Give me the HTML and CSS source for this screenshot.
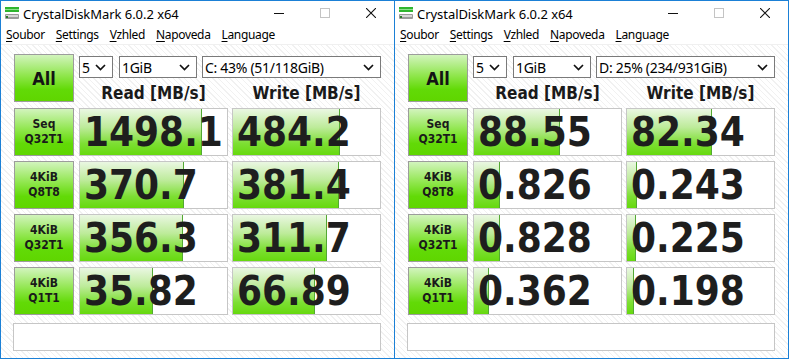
FILE: index.html
```html
<!DOCTYPE html>
<html lang="cs">
<head>
    <meta charset="UTF-8">
    <title>CrystalDiskMark 6.0.2 x64</title>
    <link rel="stylesheet" href="styles.css">
</head>
<body>
<div class="desk">

    <!-- C: drive -->
    <div class="win win-left">
        <div class="titlebar">
            <svg class="appicon" width="16" height="16" viewBox="0 0 16 16">
                <rect x="1" y="2" width="14" height="5" fill="#2fb52f"/>
                <rect x="1" y="4" width="14" height="1" fill="#8fe08f"/>
                <rect x="1" y="9" width="14" height="5" rx="1" fill="#9a9a9a"/>
                <rect x="2" y="10" width="12" height="2" fill="#d6d6d6"/>
                <rect x="2" y="11" width="2" height="2" fill="#2a7a2a"/>
            </svg>
            <span class="title">CrystalDiskMark 6.0.2 x64</span>
            <div class="caption">
                <span class="capbtn"><svg width="10" height="10" viewBox="0 0 10 10"><line x1="0" y1="5.5" x2="10" y2="5.5" stroke="#111" stroke-width="1"/></svg></span>
                <span class="capbtn"><svg width="10" height="10" viewBox="0 0 10 10"><rect x="0.5" y="0.5" width="9" height="9" fill="none" stroke="#c4c4c4" stroke-width="1"/></svg></span>
                <span class="capbtn"><svg width="10" height="10" viewBox="0 0 10 10"><path d="M0 0 L10 10 M10 0 L0 10" stroke="#111" stroke-width="1.1"/></svg></span>
            </div>
        </div>
        <div class="menubar">
            <span><u>S</u>oubor</span>
            <span><u>S</u>ettings</span>
            <span><u>V</u>zhled</span>
            <span><u>N</u>apoveda</span>
            <span><u>L</u>anguage</span>
        </div>
        <div class="client">
            <div class="toprow">
                <div class="allbtn">All</div>
                <div class="selects">
                    <div class="combo combo-count">5<svg class="chev" width="11" height="7" viewBox="0 0 11 7"><polyline points="1,1 5.5,5.5 10,1" fill="none" stroke="#111" stroke-width="1.7"/></svg></div>
                    <div class="combo combo-size">1GiB<svg class="chev" width="11" height="7" viewBox="0 0 11 7"><polyline points="1,1 5.5,5.5 10,1" fill="none" stroke="#111" stroke-width="1.7"/></svg></div>
                    <div class="combo combo-drive">C: 43% (51/118GiB)<svg class="chev" width="11" height="7" viewBox="0 0 11 7"><polyline points="1,1 5.5,5.5 10,1" fill="none" stroke="#111" stroke-width="1.7"/></svg></div>
                </div>
                <div class="colhead">Read [MB/s]</div>
                <div class="colhead">Write [MB/s]</div>
            </div>
            <div class="rows">
                <div class="label">Seq<br>Q32T1</div>
                <div class="cell"><div class="bar" style="width:122px"></div><span class="val">1498.1</span></div>
                <div class="cell"><div class="bar" style="width:107px"></div><span class="val">484.2</span></div>

                <div class="label">4KiB<br>Q8T8</div>
                <div class="cell"><div class="bar" style="width:104px"></div><span class="val">370.7</span></div>
                <div class="cell"><div class="bar" style="width:106px"></div><span class="val">381.4</span></div>

                <div class="label">4KiB<br>Q32T1</div>
                <div class="cell"><div class="bar" style="width:103px"></div><span class="val">356.3</span></div>
                <div class="cell"><div class="bar" style="width:94px"></div><span class="val">311.7</span></div>

                <div class="label">4KiB<br>Q1T1</div>
                <div class="cell"><div class="bar" style="width:73px"></div><span class="val">35.82</span></div>
                <div class="cell"><div class="bar" style="width:82px"></div><span class="val">66.89</span></div>
            </div>
            <div class="comment"></div>
        </div>
    </div>

    <!-- D: drive -->
    <div class="win win-right">
        <div class="titlebar">
            <svg class="appicon" width="16" height="16" viewBox="0 0 16 16">
                <rect x="1" y="2" width="14" height="5" fill="#2fb52f"/>
                <rect x="1" y="4" width="14" height="1" fill="#8fe08f"/>
                <rect x="1" y="9" width="14" height="5" rx="1" fill="#9a9a9a"/>
                <rect x="2" y="10" width="12" height="2" fill="#d6d6d6"/>
                <rect x="2" y="11" width="2" height="2" fill="#2a7a2a"/>
            </svg>
            <span class="title">CrystalDiskMark 6.0.2 x64</span>
            <div class="caption">
                <span class="capbtn"><svg width="10" height="10" viewBox="0 0 10 10"><line x1="0" y1="5.5" x2="10" y2="5.5" stroke="#111" stroke-width="1"/></svg></span>
                <span class="capbtn"><svg width="10" height="10" viewBox="0 0 10 10"><rect x="0.5" y="0.5" width="9" height="9" fill="none" stroke="#c4c4c4" stroke-width="1"/></svg></span>
                <span class="capbtn"><svg width="10" height="10" viewBox="0 0 10 10"><path d="M0 0 L10 10 M10 0 L0 10" stroke="#111" stroke-width="1.1"/></svg></span>
            </div>
        </div>
        <div class="menubar">
            <span><u>S</u>oubor</span>
            <span><u>S</u>ettings</span>
            <span><u>V</u>zhled</span>
            <span><u>N</u>apoveda</span>
            <span><u>L</u>anguage</span>
        </div>
        <div class="client">
            <div class="toprow">
                <div class="allbtn">All</div>
                <div class="selects">
                    <div class="combo combo-count">5<svg class="chev" width="11" height="7" viewBox="0 0 11 7"><polyline points="1,1 5.5,5.5 10,1" fill="none" stroke="#111" stroke-width="1.7"/></svg></div>
                    <div class="combo combo-size">1GiB<svg class="chev" width="11" height="7" viewBox="0 0 11 7"><polyline points="1,1 5.5,5.5 10,1" fill="none" stroke="#111" stroke-width="1.7"/></svg></div>
                    <div class="combo combo-drive">D: 25% (234/931GiB)<svg class="chev" width="11" height="7" viewBox="0 0 11 7"><polyline points="1,1 5.5,5.5 10,1" fill="none" stroke="#111" stroke-width="1.7"/></svg></div>
                </div>
                <div class="colhead">Read [MB/s]</div>
                <div class="colhead">Write [MB/s]</div>
            </div>
            <div class="rows">
                <div class="label">Seq<br>Q32T1</div>
                <div class="cell"><div class="bar" style="width:86px"></div><span class="val">88.55</span></div>
                <div class="cell"><div class="bar" style="width:85px"></div><span class="val">82.34</span></div>

                <div class="label">4KiB<br>Q8T8</div>
                <div class="cell"><div class="bar" style="width:26px"></div><span class="val">0.826</span></div>
                <div class="cell"><div class="bar" style="width:10px"></div><span class="val">0.243</span></div>

                <div class="label">4KiB<br>Q32T1</div>
                <div class="cell"><div class="bar" style="width:26px"></div><span class="val">0.828</span></div>
                <div class="cell"><div class="bar" style="width:9px"></div><span class="val">0.225</span></div>

                <div class="label">4KiB<br>Q1T1</div>
                <div class="cell"><div class="bar" style="width:15px"></div><span class="val">0.362</span></div>
                <div class="cell"><div class="bar" style="width:7px"></div><span class="val">0.198</span></div>
            </div>
            <div class="comment"></div>
        </div>
    </div>

</div>
</body>
</html>
```

FILE: styles.css
```css
html, body {
    margin: 0;
    padding: 0;
    background: #ffffff;
}
body {
    font-family: 'Noto Sans', 'Open Sans', sans-serif;
    color: #000;
}
.desk {
    display: flex;
    width: 790px;
    height: 360px;
}

/* window frame */
.win {
    box-sizing: border-box;
    height: 359px;
    border: 1px solid #1b80d6;
    display: flex;
    flex-direction: column;
    background: #fff;
}
.win-left {
    width: 394px;
    border-right: none;
}
.win-right {
    width: 395px;
}

.titlebar {
    height: 24px;
    display: flex;
    align-items: center;
    background: #fff;
}
.appicon {
    margin-left: 3px;
    margin-right: 3px;
}
.title {
    font-size: 13px;
    letter-spacing: -0.05px;
    margin-top: 1px;
}
.caption {
    margin-left: auto;
    display: flex;
    height: 24px;
}
.capbtn {
    width: 46px;
    display: flex;
    align-items: center;
    justify-content: center;
}
.capbtn svg {
    display: block;
}

.menubar {
    height: 19px;
    display: flex;
    align-items: center;
    gap: 11px;
    padding-left: 5px;
    font-size: 12px;
    letter-spacing: -0.35px;
    border-bottom: 1px solid #f0f0f0;
    background: #fff;
}
.menubar u {
    text-decoration-thickness: 1px;
    text-underline-offset: 2px;
}

/* client area with the faint hatch */
.client {
    flex: 1;
    padding: 9px 0 0 13px;
    background: repeating-linear-gradient(45deg, #ffffff 0, #ffffff 3px, #f1f1f1 3px, #f1f1f1 4px);
}

.toprow {
    display: grid;
    grid-template-columns: 61px 149px 149px;
    grid-template-rows: 25px 23px;
    column-gap: 4px;
    height: 48px;
    margin-bottom: 6px;
}
.allbtn {
    grid-row: 1 / 3;
    width: 60px;
    box-sizing: border-box;
    border: 1px solid #9c9c9c;
    background: linear-gradient(#d2f4bd 0%, #8fe64c 45%, #62da07 75%, #5fd600 100%);
    display: flex;
    align-items: center;
    justify-content: center;
    font-family: 'DejaVu Sans Condensed', 'DejaVu Sans', sans-serif;
    font-stretch: condensed;
    font-weight: bold;
    font-size: 18px;
    color: #141414;
}
.selects {
    grid-column: 2 / 4;
    display: flex;
    align-items: flex-start;
    padding-top: 2px;
}
.combo {
    box-sizing: border-box;
    height: 22px;
    border: 1px solid #7a7a7a;
    background: #fff;
    display: flex;
    align-items: center;
    padding-left: 2px;
    font-size: 14px;
    letter-spacing: -0.3px;
    color: #000;
}
.combo .chev {
    margin-left: auto;
    margin-right: 6px;
}
.combo-count {
    width: 34px;
    margin-right: 6px;
}
.combo-size {
    width: 78px;
    margin-right: 5px;
}
.combo-drive {
    width: 179px;
}
.colhead {
    font-family: 'DejaVu Sans Condensed', 'DejaVu Sans', sans-serif;
    font-stretch: condensed;
    font-weight: bold;
    font-size: 17px;
    text-align: center;
    line-height: 23px;
    padding-top: 3px;
    color: #1a1a1a;
}

.rows {
    display: grid;
    grid-template-columns: 61px 149px 149px;
    grid-auto-rows: 48px;
    column-gap: 4px;
    row-gap: 5px;
}
.label {
    width: 60px;
    box-sizing: border-box;
    border: 1px solid #9c9c9c;
    background: linear-gradient(#d2f4bd 0%, #8fe64c 45%, #62da07 75%, #5fd600 100%);
    display: flex;
    align-items: center;
    justify-content: center;
    text-align: center;
    font-family: 'DejaVu Sans Condensed', 'DejaVu Sans', sans-serif;
    font-stretch: condensed;
    font-weight: bold;
    font-size: 12px;
    line-height: 15px;
    color: #1a1a1a;
}
.cell {
    position: relative;
    box-sizing: border-box;
    border: 1px solid #c6c6c6;
    background: #fff;
    overflow: hidden;
}
.bar {
    position: absolute;
    left: 0;
    top: 0;
    bottom: 0;
    box-sizing: border-box;
    border-right: 1px solid #53a833;
    background: linear-gradient(#eaf7e2 0%, #bdeb9a 40%, #7ddf33 75%, #66d90e 100%);
}
.val {
    position: relative;
    display: block;
    padding-left: 4px;
    font-family: 'DejaVu Sans Condensed', 'DejaVu Sans', sans-serif;
    font-stretch: condensed;
    font-weight: bold;
    font-size: 40px;
    line-height: 46px;
    color: #1e1e1e;
}

.comment {
    box-sizing: border-box;
    width: 368px;
    height: 28px;
    margin-top: 8px;
    margin-left: -1px;
    border: 1px solid #c6c6c6;
    background: #fff;
}
```
